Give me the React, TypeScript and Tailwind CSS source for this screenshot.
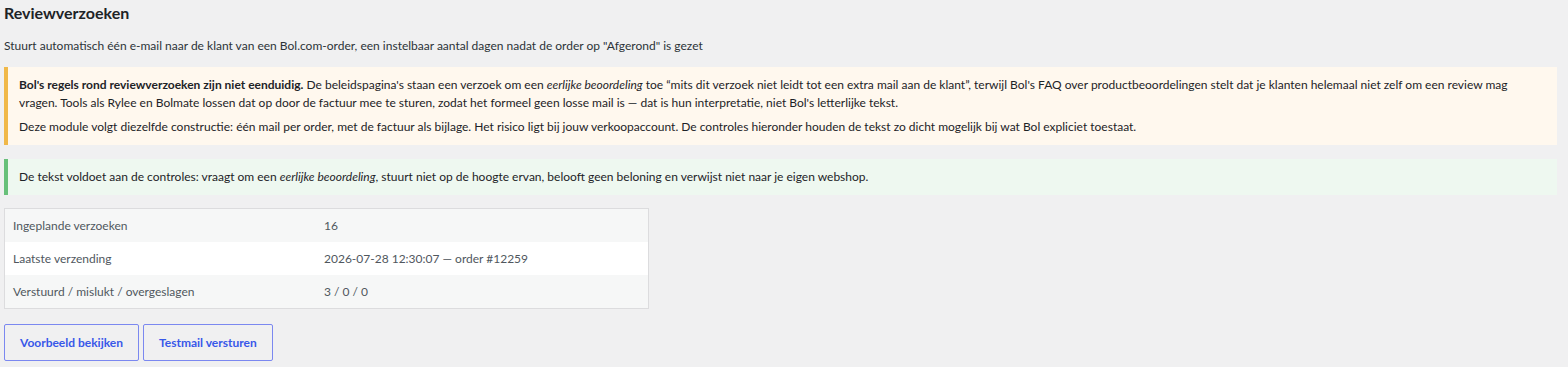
const font = { fontFamily: 'Lato, "Segoe UI", sans-serif' };

const rows = [
  { label: "Ingeplande verzoeken", value: "16" },
  { label: "Laatste verzending", value: "2026-07-28 12:30:07 — order #12259" },
  { label: "Verstuurd / mislukt / overgeslagen", value: "3 / 0 / 0" },
];

export default function App() {
  return (
    <div
      className="min-h-[367px] bg-[#f0f0f1] pl-[4px] pr-[11px] text-[12px] leading-[18px] text-[#1d2327]"
      style={font}
    >
      <h1 className="text-[16px] font-bold leading-[26px] text-[#1d2327]">
        Reviewverzoeken
      </h1>
      <p className="mt-[11px] text-[#2c3338]">
        Stuurt automatisch één e-mail naar de klant van een Bol.com-order, een
        instelbaar aantal dagen nadat de order op "Afgerond" is gezet
      </p>

      {/* Warning notice */}
      <div className="mt-[12px] border-l-4 border-[#f0b849] bg-[#fff8ee] py-[9px] pl-[11px] pr-[12px]">
        <p>
          <strong className="font-bold">
            Bol's regels rond reviewverzoeken zijn niet eenduidig.
          </strong>{" "}
          De beleidspagina's staan een verzoek om een{" "}
          <em>eerlijke beoordeling</em> toe “mits dit verzoek niet leidt tot
          een extra mail aan de klant”, terwijl Bol's FAQ over
          productbeoordelingen stelt dat je klanten helemaal niet zelf om een
          review mag vragen. Tools als Rylee en Bolmate lossen dat op door de
          factuur mee te sturen, zodat het formeel geen losse mail is — dat is
          hun interpretatie, niet Bol's letterlijke tekst.
        </p>
        <p className="mt-[6px]">
          Deze module volgt diezelfde constructie: één mail per order, met de
          factuur als bijlage. Het risico ligt bij jouw verkoopaccount. De
          controles hieronder houden de tekst zo dicht mogelijk bij wat Bol
          expliciet toestaat.
        </p>
      </div>

      {/* Success notice */}
      <div className="mt-[14px] border-l-4 border-[#68c07a] bg-[#eef8f0] py-[9px] pl-[11px] pr-[12px]">
        <p>
          De tekst voldoet aan de controles: vraagt om een{" "}
          <em>eerlijke beoordeling</em>, stuurt niet op de hoogte ervan,
          belooft geen beloning en verwijst niet naar je eigen webshop.
        </p>
      </div>

      {/* Status table */}
      <div className="mt-[13px] w-[645px] border border-[#dcdcde] bg-white text-[#50575e]">
        {rows.map((r, i) => (
          <div
            key={r.label}
            className={[
              "grid h-[33px] grid-cols-[311px_1fr] items-center px-[8px]",
              i % 2 === 0 ? "bg-[#f6f7f7]" : "bg-white",
            ].join(" ")}
          >
            <span>{r.label}</span>
            <span>{r.value}</span>
          </div>
        ))}
      </div>

      {/* Actions */}
      <div className="mt-[15px] flex gap-[4px] pb-[7px]">
        <button
          type="button"
          className="h-[37px] rounded-[2px] border border-[#7b88f0] px-[15px] text-[12px] font-bold text-[#3858e9]"
        >
          Voorbeeld bekijken
        </button>
        <button
          type="button"
          className="h-[37px] rounded-[2px] border border-[#7b88f0] px-[15px] text-[12px] font-bold text-[#3858e9]"
        >
          Testmail versturen
        </button>
      </div>
    </div>
  );
}
